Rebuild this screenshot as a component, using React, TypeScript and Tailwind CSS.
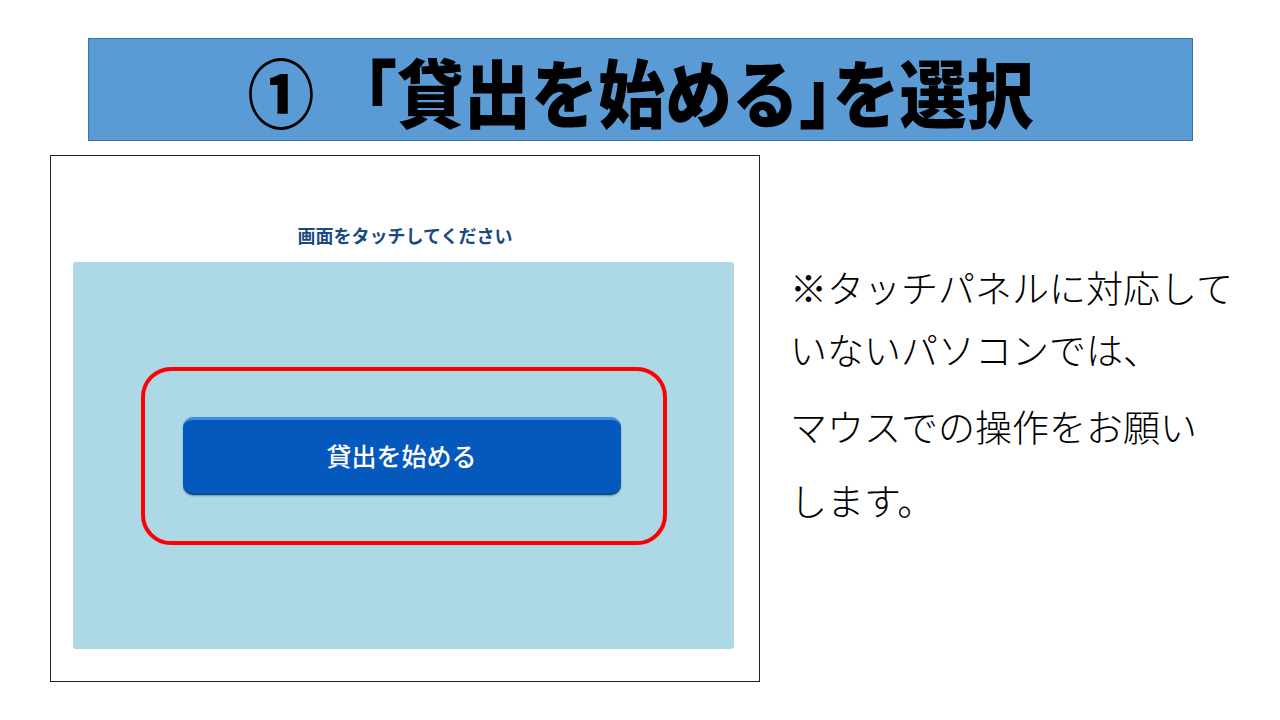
const JP = { fontFamily: '"Noto Sans CJK JP", "Noto Sans", sans-serif' };

const NOTE_LINES = [
  { text: "※タッチパネルに対応して", gap: "mt-0" },
  { text: "いないパソコンでは、", gap: "mt-[12px]" },
  { text: "マウスでの操作をお願い", gap: "mt-[27px]" },
  { text: "します。", gap: "mt-[24px]" },
];

function StartButton() {
  return (
    <div className="flex h-[178px] w-[526px] items-center justify-start rounded-[30px] border-4 border-[#ff0000] pl-[38px]">
      <button className="flex h-[78px] w-[438px] items-center justify-center rounded-[10px] border-t-[3px] border-b-2 border-t-[#3f8fe6] border-b-[#0a4a98] bg-[#0558bc] text-[25px] font-medium text-white shadow-[0_1px_2px_rgba(0,0,0,0.35)]">
        貸出を始める
      </button>
    </div>
  );
}

function KioskScreen() {
  return (
    <div className="flex h-[527px] w-[710px] flex-col items-center border border-[#222] bg-white pt-[67px]">
      <p className="text-[18px] leading-[24px] font-bold text-[#1b4a80]">
        画面をタッチしてください
      </p>
      <div className="mt-[15px] ml-[22px] flex h-[387px] w-[661px] items-center justify-center self-start rounded-[3px] bg-[#add8e6]">
        <StartButton />
      </div>
    </div>
  );
}

export default function App() {
  return (
    <div className="h-[720px] w-[1280px] overflow-hidden bg-white" style={JP}>
      {/* step heading */}
      <div className="ml-[88px] mt-[38px] flex h-[103px] w-[1105px] items-center justify-center border border-[#41719c] bg-[#5b9bd5]">
        <h1 className="scale-y-[1.1] text-[67px] leading-none font-black whitespace-nowrap text-black">
          ① 「貸出を始める<span className="[font-feature-settings:'halt']">」</span>を選択
        </h1>
      </div>

      <div className="ml-[50px] mt-[14px] flex">
        <KioskScreen />
        <div className="ml-[30px] mt-[107px] text-[37px] font-light text-black">
          {NOTE_LINES.map((line) => (
            <div key={line.text} className={`h-[50px] leading-[50px] whitespace-nowrap ${line.gap}`}>
              {line.text}
            </div>
          ))}
        </div>
      </div>
    </div>
  );
}
